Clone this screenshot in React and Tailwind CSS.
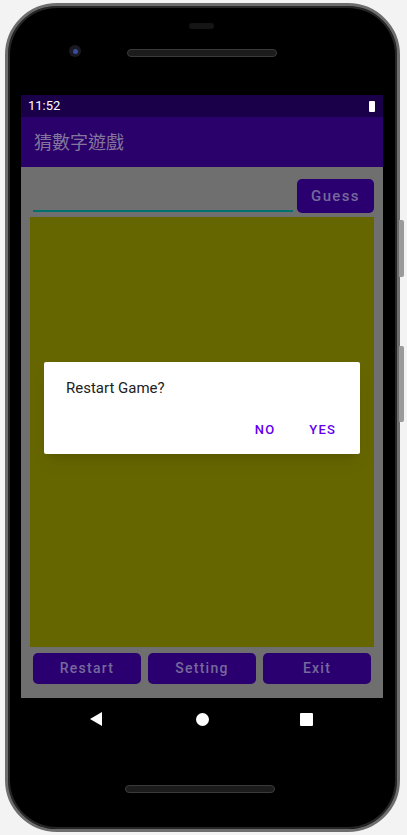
const FONT = { fontFamily: "Roboto, 'Noto Sans CJK TC', sans-serif" };

const ActionButton = ({ label }) => (
    <button className="h-full rounded-[5px] bg-[#2a0070] text-[14px] font-medium tracking-[0.09em] text-[#76699b]">
        {label}
    </button>
);

const RestartDialog = () => (
    <div className="absolute left-[23px] top-[267px] w-[316px] h-[92px] rounded-[2px] bg-white shadow-lg">
        <p className="pl-[22px] pt-[16px] text-[15px] leading-[20px] text-[#222]">Restart Game?</p>
        <div className="flex justify-end gap-[34px] pr-[24px] pt-[22px] text-[13px] font-medium tracking-[0.09em] text-[#6200ee]">
            <span>NO</span>
            <span>YES</span>
        </div>
    </div>
);

export default function App() {
    return (
        <div className="w-[407px] h-[835px] bg-[#f3f3f3] pt-[3px] pl-[5px] relative" style={FONT}>
            {/* side keys */}
            <div className="absolute left-[399px] top-[220px] w-[5px] h-[57px] rounded-r-[2px] bg-[#9a9a9a]" />
            <div className="absolute left-[399px] top-[346px] w-[5px] h-[76px] rounded-r-[2px] bg-[#9a9a9a]" />

            <div className="w-[395px] h-[829px] rounded-[52px] bg-black border-[3px] border-[#6d6d6d] shadow-[inset_0_0_0_2px_#262626] overflow-hidden">
                {/* top bezel */}
                <div className="relative h-[89px]">
                    <div className="absolute left-[181px] top-[17px] w-[25px] h-[6px] rounded-full bg-[#151515]" />
                    <div className="absolute left-[61px] top-[39px] w-[12px] h-[12px] rounded-full bg-[#1a1a22] flex items-center justify-center">
                        <div className="w-[5px] h-[5px] rounded-full bg-[#3a4aa0]" />
                    </div>
                    <div className="absolute left-[119px] top-[43px] w-[150px] h-[8px] rounded-full bg-[#1c1c1c] border border-[#3a3a3a]" />
                </div>

                {/* screen */}
                <div className="relative ml-[13px] w-[362px]">
                    <div className="h-[22px] bg-[#1a0049] flex items-center justify-between px-[7px]">
                        <span className="text-[13px] text-white">11:52</span>
                        <div className="w-[6px] h-[11px] rounded-[1px] bg-white mr-[1px]" />
                    </div>
                    <div className="h-[50px] bg-[#2a006a] flex items-center pl-[13px]">
                        <span className="text-[18px] text-[#82769c]">猜數字遊戲</span>
                    </div>
                    <div className="h-[531px] bg-[#6f6f6f] px-[9px] pt-[12px]">
                        <div className="flex items-end gap-[4px] h-[34px]">
                            <div className="flex-1 ml-[3px] mb-[1px] h-[2px] bg-[#00706c]" />
                            <button className="w-[77px] h-full rounded-[5px] bg-[#2a0070] text-[15px] font-medium tracking-[0.09em] text-[#76699b]">
                                Guess
                            </button>
                        </div>
                        <div className="mt-[4px] h-[430px] bg-[#666600]" />
                        <div className="mt-[6px] px-[3px] h-[31px] grid grid-cols-3 gap-[7px]">
                            <ActionButton label="Restart" />
                            <ActionButton label="Setting" />
                            <ActionButton label="Exit" />
                        </div>
                    </div>
                    <div className="h-[42px] bg-black flex items-center">
                        <div className="w-[150px] flex justify-center">
                            <svg width="12" height="14" viewBox="0 0 12 14">
                                <path d="M12 0 L0 7 L12 14 Z" fill="white" />
                            </svg>
                        </div>
                        <div className="w-[62px] flex justify-center">
                            <div className="w-[13px] h-[13px] rounded-full bg-white" />
                        </div>
                        <div className="w-[146px] flex justify-center">
                            <div className="w-[13px] h-[13px] rounded-[1px] bg-white" />
                        </div>
                    </div>
                    <RestartDialog />
                </div>

                {/* bottom bezel */}
                <div className="relative h-[85px]">
                    <div className="absolute left-[117px] top-[45px] w-[150px] h-[8px] rounded-full bg-[#1c1c1c] border border-[#3a3a3a]" />
                </div>
            </div>
        </div>
    );
}
